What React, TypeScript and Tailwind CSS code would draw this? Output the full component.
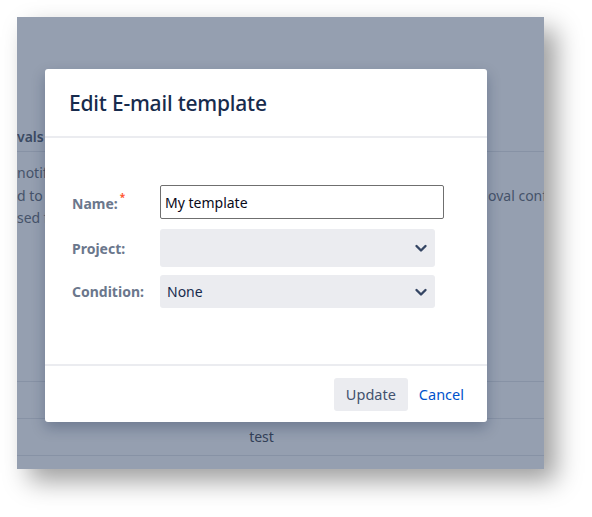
import React from "react";

function Chevron() {
  return (
    <svg width="14" height="14" viewBox="0 0 14 14" fill="none">
      <path d="M2.5 5l4.5 4.5L11.5 5" stroke="#344563" strokeWidth="2.4" strokeLinecap="round" strokeLinejoin="round" />
    </svg>
  );
}

export default function App() {
  return (
    <div className="w-[592px] h-[517px] bg-white pt-[17px] pl-[17px]" style={{ fontFamily: '"Noto Sans", "Open Sans", sans-serif' }}>
      <div className="relative w-[527px] h-[452px] bg-[#959fb0] overflow-hidden shadow-[12px_12px_24px_rgba(0,0,0,0.38)] text-[#46536a]">
        {/* background page content */}
        <div className="flex flex-col pt-[109px]">
          <div className="h-[22px] text-[14px] font-semibold text-[#3b4a63] leading-[22px] whitespace-nowrap">vals</div>
          <div className="h-[3px]" />
          <div className="h-px bg-[#8792a5]" />
          <div className="pt-[10px] text-[14px] leading-[22.5px] whitespace-nowrap">
            <div>notify</div>
            <div className="flex">
              <span className="w-[471px] shrink-0">d to a</span>
              <span>oval conf</span>
            </div>
            <div>sed f</div>
          </div>
          <div className="h-[151px]" />
          <div className="h-px bg-[#8792a5]" />
          <div className="h-[36px]" />
          <div className="h-px bg-[#8792a5]" />
          <div className="h-[36px] flex items-center justify-center pr-[38px] text-[14px] text-[#344158]">test</div>
          <div className="h-px bg-[#8792a5]" />
        </div>

        {/* modal */}
        <div className="absolute left-[28px] top-[52px] w-[442px] h-[353px] bg-white rounded-[3px] shadow-[0_6px_14px_rgba(9,30,66,0.28)] flex flex-col">
          <div className="h-[67px] flex items-center pl-[24px] pt-[2px]">
            <h2 className="text-[21px] font-medium text-[#172b4d] tracking-[-0.2px]">Edit E-mail template</h2>
          </div>
          <div className="h-[2px] bg-[#ebecf0]" />
          <div className="flex-1 pt-[47px] pl-[27px]">
            <div className="flex flex-col">
              <div className="flex items-center h-[34px]">
                <label className="w-[88px] text-[14px] font-bold text-[#6b778c] pt-[2px]">
                  Name:<span className="text-[#ff5630] text-[10px] align-top relative top-[-3px] ml-[2px]">*</span>
                </label>
                <div className="w-[284px] h-[34px] border border-[#6f6f6f] rounded-[2px] flex items-center pl-[4px] text-[14px] text-[#0a0a1a]">My template</div>
              </div>
              <div className="flex items-center h-[38px] mt-[10px]">
                <label className="w-[88px] text-[14px] font-bold text-[#6b778c]">Project:</label>
                <div className="w-[275px] h-[38px] bg-[#ebecf0] rounded-[3px] flex items-center justify-end pr-[7px]">
                  <Chevron />
                </div>
              </div>
              <div className="flex items-center h-[33px] mt-[8px]">
                <label className="w-[88px] text-[14px] font-bold text-[#6b778c]">Condition:</label>
                <div className="w-[275px] h-[33px] bg-[#ebecf0] rounded-[3px] flex items-center justify-between pl-[7px] pr-[7px] text-[14px] text-[#172b4d]">
                  <span>None</span>
                  <Chevron />
                </div>
              </div>
            </div>
          </div>
          <div className="h-[2px] bg-[#ebecf0]" />
          <div className="h-[56px] flex items-center justify-end pr-[23px] pt-[1px]">
            <button className="w-[74px] h-[33px] bg-[#ebecf0] rounded-[3px] text-[14.5px] text-[#42526e]">Update</button>
            <button className="ml-[11px] text-[14.5px] text-[#0052cc]">Cancel</button>
          </div>
        </div>
      </div>
    </div>
  );
}
